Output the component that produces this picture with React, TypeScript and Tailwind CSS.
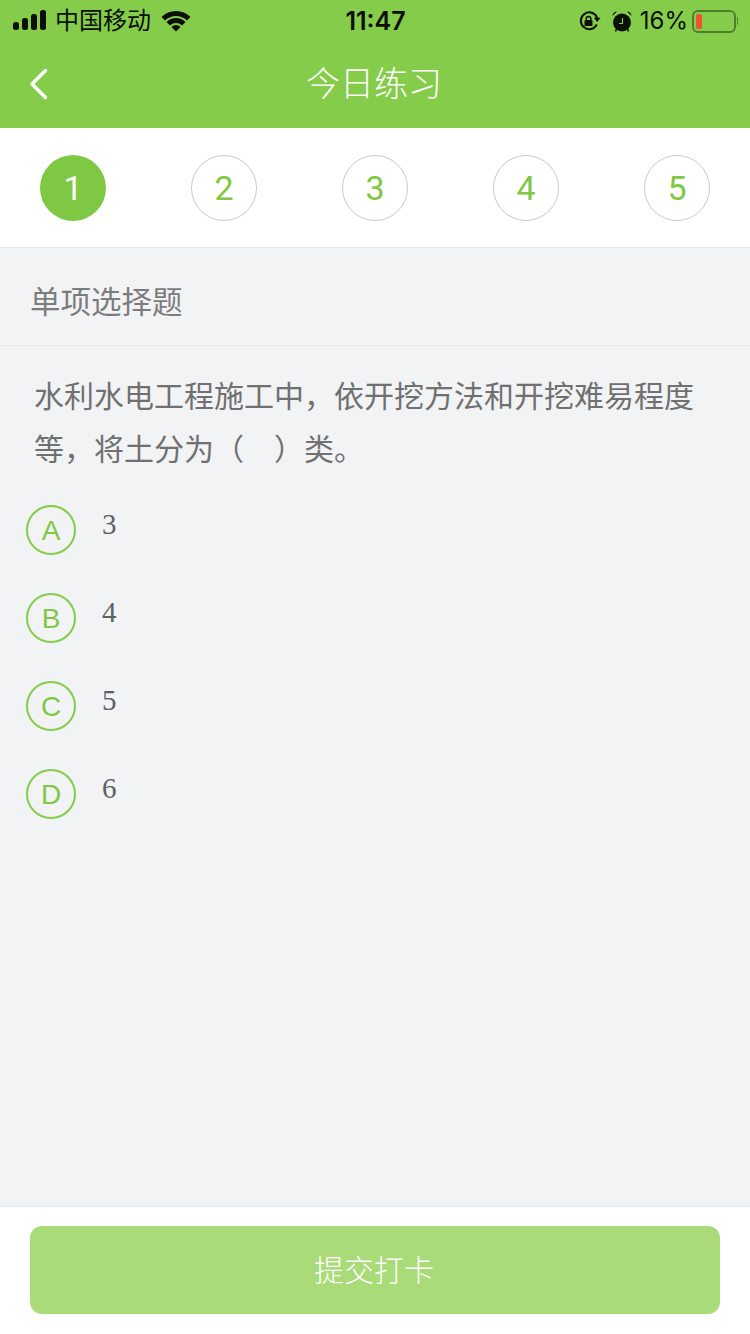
const CJK = "font-['Inter','Noto_Sans_CJK_SC',sans-serif]";

const steps = [1, 2, 3, 4, 5];

const options = [
  { label: "A", value: "3" },
  { label: "B", value: "4" },
  { label: "C", value: "5" },
  { label: "D", value: "6" },
];

const StatusBar = () => (
  <div className="h-10 pt-[2px] flex items-center justify-between pl-[13px] pr-[12px] text-[#0b0f06]">
    <div className="w-[260px] flex items-center">
      {/* Signal */}
      <svg width="34" height="22" viewBox="0 0 34 22" fill="currentColor">
        <rect x="0" y="12" width="6" height="8" rx="2.5" />
        <rect x="9" y="8" width="6" height="12" rx="2.5" />
        <rect x="18" y="4" width="6" height="16" rx="2.5" />
        <rect x="27" y="0" width="6" height="20" rx="2.5" />
      </svg>
      <span className="ml-2 text-[24px] leading-none">中国移动</span>
      <svg className="ml-[10px]" width="30" height="22" viewBox="0 0 30 22" fill="currentColor">
        <path d="M0.5 7A20.5 20.5 0 0 1 29.5 7L25.96 10.54A15.5 15.5 0 0 0 4.04 10.54Z" />
        <path d="M5.45 11.95A13.5 13.5 0 0 1 24.55 11.95L21.01 15.49A8.5 8.5 0 0 0 8.99 15.49Z" />
        <path d="M10.4 16.9A6.5 6.5 0 0 1 19.6 16.9L15 21.5Z" />
      </svg>
    </div>
    <span className="text-[25px] leading-none font-semibold font-['Inter',sans-serif]">11:47</span>
    <div className="w-[260px] flex items-center justify-end">
      {/* Rotation lock */}
      <svg width="22" height="20" viewBox="0 0 22 20" fill="none" stroke="currentColor" strokeWidth="2">
        <path d="M18.2 7A8.4 8.4 0 1 0 17.8 13.5" />
        <path d="M14.8 6.8H21.5L18.2 11z" fill="currentColor" stroke="none" />
        <rect x="5.5" y="9" width="8" height="6" rx="1" fill="currentColor" stroke="none" />
        <path d="M7.2 9.5V7.8a2.3 2.3 0 0 1 4.6 0V9.5" strokeWidth="1.5" />
      </svg>
      {/* Alarm */}
      <svg className="ml-[11px]" width="20" height="21" viewBox="0 0 20 21" fill="currentColor">
        <circle cx="10" cy="11.5" r="9" />
        <path d="M0.5 5C0.5 2.4 2.5 0.5 5 0.5zM19.5 5C19.5 2.4 17.5 0.5 15 0.5z" />
        <path d="M4.5 18 3.5 20.5M15.5 18 16.5 20.5" stroke="currentColor" strokeWidth="1.5" />
        <path d="M10.5 7V12.5H7" fill="none" stroke="#85cc4a" strokeWidth="1.2" />
      </svg>
      <span className="ml-[8px] text-[24px] leading-none font-['Inter',sans-serif]">16%</span>
      {/* Battery */}
      <div className="ml-1 flex items-center">
        <div className="w-[44px] h-[23px] rounded-[6px] border-2 border-[#4f7f2a] p-[2px]">
          <div className="w-[6px] h-full rounded-[2px] bg-[#f0522f]" />
        </div>
        <div className="ml-[1px] w-[1px] h-[8px] rounded-r-sm bg-[#4f7f2a]" />
      </div>
    </div>
  </div>
);

export default function App() {
  return (
    <div className={`w-[750px] h-[1334px] flex flex-col bg-[#f2f3f5] ${CJK}`}>
      {/* Header */}
      <header className="h-32 bg-[#85cc4a]">
        <StatusBar />
        <div className="h-[88px] flex items-center relative">
          <svg className="absolute left-[28px] top-[27px]" width="22" height="34" viewBox="0 0 22 34" fill="none" stroke="#fff" strokeWidth="3.5" strokeLinecap="round" strokeLinejoin="round">
            <path d="M17.5 3.5 4 17 17.5 30.5" />
          </svg>
          <h1 className="w-full pr-[2px] text-center text-white text-[34px] leading-none font-light">今日练习</h1>
        </div>
      </header>

      {/* Steps */}
      <div className="h-[120px] bg-white border-b border-[#e6e7e9] px-10 pt-[27px] flex justify-between items-start">
        {steps.map((step) =>
          step === 1 ? (
            <div key={step} className="w-[66px] h-[66px] rounded-full bg-[#7fc843] text-white text-[34px] flex items-center justify-center font-['Roboto',sans-serif]">
              {step}
            </div>
          ) : (
            <div key={step} className="w-[66px] h-[66px] rounded-full border border-[#c9c9c9] text-[#7fc843] text-[34px] flex items-center justify-center font-['Roboto',sans-serif]">
              {step}
            </div>
          ),
        )}
      </div>

      {/* Question type */}
      <div className="h-[98px] border-b border-[#e6e7e9] pl-[30px] pt-3 flex items-center">
        <span className="text-[30.5px] leading-none text-[#7c7c7c]">单项选择题</span>
      </div>

      {/* Question */}
      <p className="pl-[34px] pr-[50px] pt-[24px] text-[30px] leading-[52.5px] text-[#707070]">
        水利水电工程施工中，依开挖方法和开挖难易程度等，将土分为（　）类。
      </p>

      {/* Options */}
      <div className="pl-[26px] pt-[30px] flex flex-col gap-[38px] flex-1">
        {options.map((option) => (
          <div key={option.label} className="flex items-start">
            <div className="w-[50px] h-[50px] pt-[2px] rounded-full border-2 border-[#85cc4a] text-[#7fc843] text-[28px] flex items-center justify-center font-['Liberation_Sans',sans-serif]">
              {option.label}
            </div>
            <span className="ml-[26px] mt-px text-[29px] leading-[36px] text-[#5f5f66] font-['Liberation_Serif',serif]">
              {option.value}
            </span>
          </div>
        ))}
      </div>

      {/* Submit */}
      <div className="h-[128px] bg-white border-t border-[#e6e7e9] px-[30px] pt-[19px]">
        <button className="w-full h-[88px] pr-[2px] rounded-xl bg-[#a9dc78] text-white text-[30px] font-light">
          提交打卡
        </button>
      </div>
    </div>
  );
}
